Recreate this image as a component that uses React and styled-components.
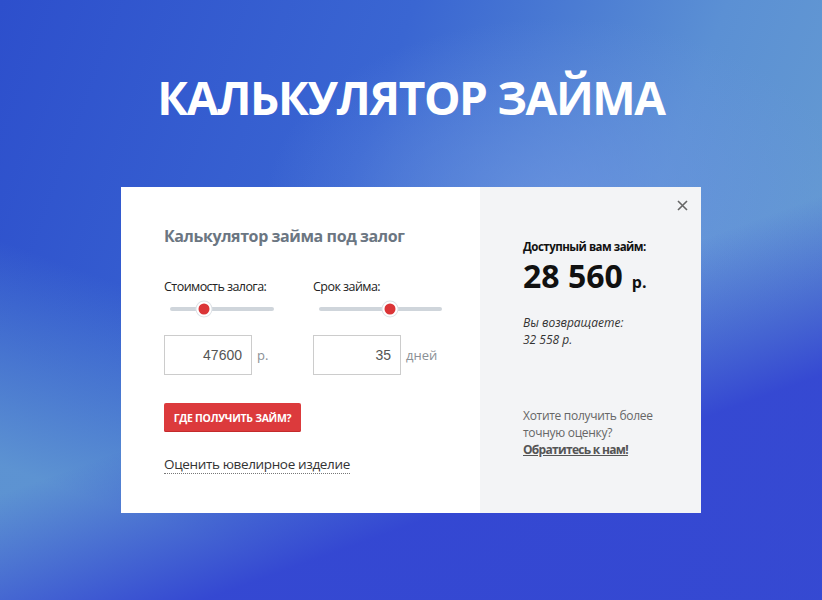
import React from 'react';
import styled, { createGlobalStyle } from 'styled-components';

const GlobalStyle = createGlobalStyle`
  html, body {
    margin: 0;
    padding: 0;
  }
  body {
    font-family: "Open Sans", "Noto Sans", sans-serif;
  }
`;

const Page = styled.div`
  width: 822px;
  height: 600px;
  overflow: hidden;
  display: flex;
  flex-direction: column;
  align-items: center;
  background:
    linear-gradient(160deg, rgba(255,255,255,0) 55%, rgba(48,64,210,0.9) 75%),
    linear-gradient(200deg, rgba(255,255,255,0) 60%, rgba(95,150,210,0.95) 85%),
    radial-gradient(ellipse 420px 260px at 560px 200px, rgba(110,150,225,0.7), rgba(110,150,225,0) 70%),
    linear-gradient(110deg, #2d4fcc 0%, #3a66d2 40%, #5b90d4 70%, #6aa0d0 100%);
`;

const Title = styled.h1`
  margin: 64px 0 0;
  font-size: 46px;
  line-height: 66px;
  font-weight: 700;
  color: #ffffff;
  letter-spacing: -1.4px;
`;

const Card = styled.div`
  margin-top: 57px;
  width: 580px;
  height: 326px;
  display: flex;
  background: #ffffff;
  position: relative;
`;

const Main = styled.div`
  width: 359px;
  box-sizing: border-box;
  padding: 38px 0 0 43px;
`;

const Heading = styled.h2`
  margin: 0;
  font-size: 16px;
  line-height: 22px;
  font-weight: 700;
  color: #6b7682;
  letter-spacing: -0.4px;
`;

const Controls = styled.div`
  display: grid;
  grid-template-columns: 149px 150px;
  margin-top: 32px;
`;

const Field = styled.div`
  display: flex;
  flex-direction: column;
`;

const Label = styled.div`
  font-size: 12.5px;
  line-height: 16px;
  color: #222;
  letter-spacing: -0.55px;
`;

const Track = styled.div`
  position: relative;
  margin: 12px 0 0 6px;
  width: ${p => p.$width}px;
  height: 4px;
  border-radius: 2px;
  background: #cfd5db;
`;

const Thumb = styled.span`
  position: absolute;
  top: 50%;
  width: 11px;
  height: 11px;
  border-radius: 50%;
  background: #db3537;
  border: 2px solid #ffffff;
  box-shadow: 0 0 0 1px #dfe3e7;
  transform: translate(-50%, -50%);
`;

const InputRow = styled.div`
  display: flex;
  align-items: center;
  gap: 5px;
  margin-top: 24px;
`;

const Input = styled.div`
  width: 88px;
  height: 40px;
  box-sizing: border-box;
  border: 1px solid #cccccc;
  padding-right: 9px;
  display: flex;
  align-items: center;
  justify-content: flex-end;
  font-family: "Liberation Sans", Arial, sans-serif;
  font-size: 14px;
  color: #555;
`;

const Unit = styled.span`
  font-size: 13px;
  color: #8a8f95;
`;

const Button = styled.button`
  margin-top: 28px;
  width: 137px;
  height: 29px;
  border: none;
  border-radius: 2px;
  background: #dc3a3c;
  box-shadow: inset 0 -1px 0 #c42a2c;
  color: #ffffff;
  font-family: "Open Sans", sans-serif;
  font-size: 10.5px;
  font-weight: 700;
  letter-spacing: -0.3px;
  text-transform: uppercase;
  cursor: pointer;
  padding: 0;
`;

const DottedLink = styled.a`
  display: inline-block;
  margin-top: 24px;
  font-size: 13.5px;
  line-height: 17px;
  letter-spacing: -0.35px;
  color: #333;
  text-decoration: none;
  border-bottom: 1px dotted #777;
`;

const Side = styled.div`
  flex: 1;
  background: #f3f4f6;
  box-sizing: border-box;
  padding: 52px 0 0 43px;
  display: flex;
  flex-direction: column;
`;

const SideLabel = styled.div`
  font-size: 11.5px;
  line-height: 16px;
  font-weight: 700;
  letter-spacing: -0.5px;
  color: #111;
`;

const Amount = styled.div`
  margin-top: 4px;
  font-size: 32px;
  line-height: 34px;
  font-weight: 700;
  color: #111;
  small {
    font-size: 16px;
    margin-left: 9px;
  }
`;

const Returns = styled.div`
  margin-top: 15px;
  font-size: 12px;
  line-height: 17px;
  font-style: italic;
  color: #333;
`;

const Contact = styled.div`
  margin-top: auto;
  margin-bottom: 55px;
  font-size: 12px;
  line-height: 17px;
  letter-spacing: -0.3px;
  color: #666;
  a {
    font-weight: 700;
    letter-spacing: -0.7px;
    color: #555;
    text-decoration: underline;
  }
`;

const Close = styled.button`
  position: absolute;
  top: 8px;
  right: 9px;
  width: 20px;
  height: 20px;
  padding: 0;
  border: none;
  background: none;
  cursor: pointer;
  display: flex;
  align-items: center;
  justify-content: center;
`;

const Slider = ({ width, value }) => (
  <Track $width={width}>
    <Thumb style={{ left: `${value * 100}%` }} />
  </Track>
);

const App = () => (
  <Page>
    <GlobalStyle />
    <Title>КАЛЬКУЛЯТОР ЗАЙМА</Title>
    <Card>
      <Main>
        <Heading>Калькулятор займа под залог</Heading>
        <Controls>
          <Field>
            <Label>Стоимость залога:</Label>
            <Slider width={104} value={0.33} />
            <InputRow>
              <Input>47600</Input>
              <Unit>р.</Unit>
            </InputRow>
          </Field>
          <Field>
            <Label>Срок займа:</Label>
            <Slider width={123} value={0.58} />
            <InputRow>
              <Input>35</Input>
              <Unit>дней</Unit>
            </InputRow>
          </Field>
        </Controls>
        <Button>Где получить займ?</Button>
        <div>
          <DottedLink href="#">Оценить ювелирное изделие</DottedLink>
        </div>
      </Main>
      <Side>
        <SideLabel>Доступный вам займ:</SideLabel>
        <Amount>28 560<small>р.</small></Amount>
        <Returns>
          Вы возвращаете:<br />32 558 р.
        </Returns>
        <Contact>
          Хотите получить более<br />точную оценку?<br />
          <a href="#">Обратитесь к нам!</a>
        </Contact>
      </Side>
      <Close aria-label="Закрыть">
        <svg width="11" height="11" viewBox="0 0 11 11">
          <path d="M1 1L10 10M10 1L1 10" stroke="#666" strokeWidth="1.6" />
        </svg>
      </Close>
    </Card>
  </Page>
);

export default App;
